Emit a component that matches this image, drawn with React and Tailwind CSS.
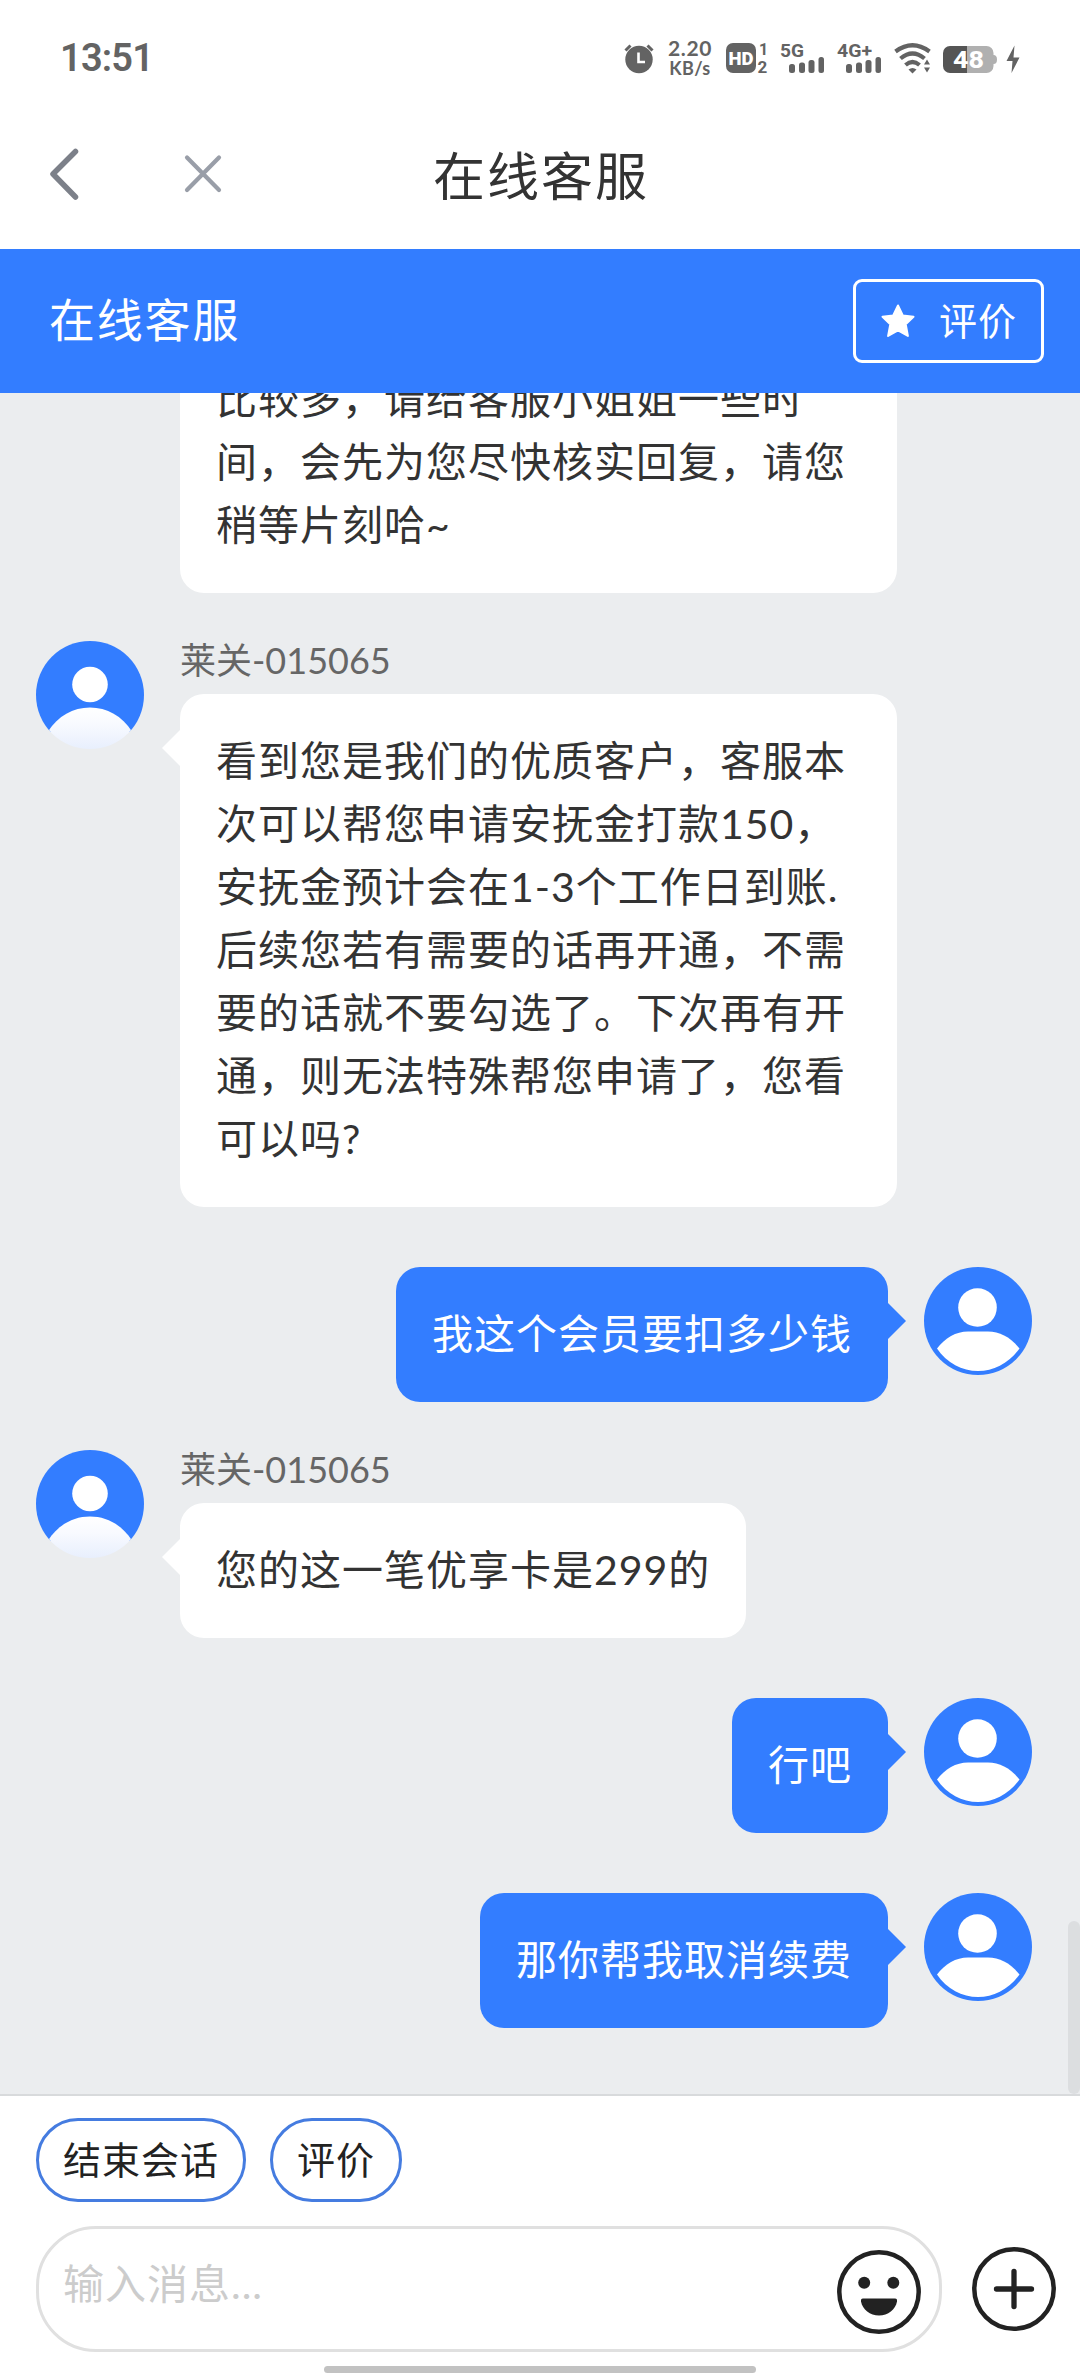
import React from 'react'

const messages = [
  {
    id: 1,
    from: 'agent',
    continued: true,
    text: '比较多，请给客服小姐姐一些时\n间，会先为您尽快核实回复，请您\n稍等片刻哈~',
  },
  {
    id: 2,
    from: 'agent',
    name: '莱关-015065',
    text: '看到您是我们的优质客户，客服本\n次可以帮您申请安抚金打款150，\n安抚金预计会在1-3个工作日到账.\n后续您若有需要的话再开通，不需\n要的话就不要勾选了。下次再有开\n通，则无法特殊帮您申请了，您看\n可以吗?',
  },
  { id: 3, from: 'user', text: '我这个会员要扣多少钱' },
  { id: 4, from: 'agent', name: '莱关-015065', text: '您的这一笔优享卡是299的' },
  { id: 5, from: 'user', text: '行吧' },
  { id: 6, from: 'user', text: '那你帮我取消续费' },
]

const quickActions = ['结束会话', '评价']

const SignalBars = () => (
  <g>
    <rect x="9" y="24" width="6" height="9" rx="2.5" />
    <rect x="19" y="22.5" width="6" height="10.5" rx="2.5" />
    <rect x="28.5" y="20" width="6" height="13" rx="2.5" />
    <rect x="38.5" y="17" width="5.5" height="16" rx="2.5" />
  </g>
)

const Signal = ({ label, width }) => (
  <svg className="overflow-visible" width="46" height="36" viewBox="0 0 46 36" fill="#636363">
    <text x="0" y="17" fontSize="19" fontWeight="700" fontFamily="Roboto, sans-serif" textLength={width} lengthAdjust="spacingAndGlyphs">
      {label}
    </text>
    <SignalBars />
  </svg>
)

const StatusBar = () => (
  <div className="flex h-[104px] items-center pt-3 pl-[60px] text-[#636363]">
    <span className="w-[562px] font-[Roboto,sans-serif] text-[38px] leading-[38px] font-semibold tracking-[-0.8px]">13:51</span>

    <svg className="shrink-0" width="34" height="36" viewBox="0 0 34 36">
      <circle cx="17" cy="19.5" r="13.7" fill="#636363" />
      <path d="M3.5 10.5l5-5M30.5 10.5l-5-5" stroke="#636363" strokeWidth="3" fill="none" />
      <path d="M16.5 12.5v9.500h6.500" stroke="#fff" strokeWidth="2.6" fill="none" />
    </svg>

    <div className="ml-[11px] flex w-[46px] flex-col items-center font-bold">
      <span className="text-[21px] leading-[18px] tracking-[0.6px]">2.20</span>
      <span className="mt-0.5 text-[18px] leading-[18px] tracking-[0.4px]">KB/s</span>
    </div>

    <svg className="ml-[13px]" width="44" height="36" viewBox="0 0 44 36" fill="#636363">
      <rect y="3" width="30" height="30" rx="7" />
      <text x="2.5" y="25" fontSize="19" fontWeight="900" fontFamily="Roboto, sans-serif" fill="#fff" textLength="25" lengthAdjust="spacingAndGlyphs">HD</text>
      <text x="33" y="14.5" fontSize="16" fontWeight="700" fontFamily="Roboto, sans-serif">1</text>
      <text x="31.5" y="32.5" fontSize="17" fontWeight="700" fontFamily="Roboto, sans-serif">2</text>
    </svg>

    <div className="ml-[10px] flex gap-[11px]">
      <Signal label="5G" width="24" />
      <Signal label="4G+" width="35" />
    </div>

    <svg className="ml-[11px]" width="38" height="36" viewBox="0 0 38 36" fill="none" stroke="#636363" strokeWidth="4.2">
      <path d="M1.5 11.5Q18.5 -1 35.5 11.5" />
      <path d="M6.5 18.5Q18.5 8.5 30.5 18.5" />
      <path d="M11.5 25Q18.5 19 25.5 25" />
      <path d="M14.5 29.500q4-3 8 0l-4 4z" fill="#636363" stroke="none" />
      <path d="M30 24.500h6l-3-5zM30 27.500h6l-3 5z" fill="#636363" stroke="none" />
    </svg>

    <svg className="ml-[11px]" width="54" height="36" viewBox="0 0 54 36">
      <path d="M7 6h17v27H7a7 7 0 0 1-7-7V13a7 7 0 0 1 7-7z" fill="#555" />
      <path d="M24 6h19.500a7 7 0 0 1 7 7v2a3.500 4.500 0 0 1 0 9v2a7 7 0 0 1-7 7H24z" fill="#b0b0b0" />
      <text x="10" y="28" fontSize="24" fontWeight="800" fontFamily="Roboto, sans-serif" fill="#fff" textLength="31" lengthAdjust="spacingAndGlyphs">48</text>
    </svg>

    <svg className="ml-[9px]" width="14" height="36" viewBox="0 0 14 36" fill="#636363">
      <path d="M8.500 5.500L0.500 21h6l-1 12L13.500 17.500h-6z" />
    </svg>
  </div>
)

const NavBar = () => (
  <div className="grid h-[145px] grid-cols-[1fr_auto_1fr] items-center">
    <div className="flex items-center gap-[103px] pb-[5px] pl-[48px]">
      <svg width="32" height="54" viewBox="0 0 32 54" fill="none" stroke="#7c8089" strokeWidth="5.5" strokeLinecap="round" strokeLinejoin="round">
        <path d="M27.5 4.500L5 27l22.500 23" />
      </svg>
      <svg width="40" height="40" viewBox="0 0 40 40" fill="none" stroke="#999ea8" strokeWidth="4.2" strokeLinecap="round">
        <path d="M4 3.500L36 36M36 3.500L4 36" />
      </svg>
    </div>
    <h1 className="pb-0.5 pl-0.5 text-[52px] leading-[60px] tracking-[2px] text-[#333]">在线客服</h1>
  </div>
)

const ServiceHeader = () => (
  <div className="flex h-[144px] shrink-0 items-center justify-between bg-[#337dff] pr-9 pl-[49px] text-white">
    <span className="pb-0.5 text-[46px] leading-[60px] tracking-[1.8px]">在线客服</span>
    <button className="flex h-[84px] w-[191px] items-center justify-between rounded-[9px] border-3 border-white pr-6 pl-[25px] text-[38px] leading-[48px] tracking-[1px]">
      <svg width="34" height="34" viewBox="0 0 34 34" fill="#fff" stroke="#fff" strokeWidth="2" strokeLinejoin="round">
        <path d="M17 1.500l4.800 10 10.700 1.300-7.800 7.500 2.200 11.700L17 26.500 7.100 32l2.200-11.700L1.500 12.800l10.700-1.300z" />
      </svg>
      <span className="pb-0.5">评价</span>
    </button>
  </div>
)

const AgentAvatar = () => (
  <svg className="shrink-0" width="108" height="108" viewBox="0 0 108 108">
    <defs>
      <linearGradient id="agentBody" x1="0" y1="0" x2="0" y2="1">
        <stop offset="0" stopColor="#fff" />
        <stop offset="0.4" stopColor="#f8faff" />
        <stop offset="1" stopColor="#e8effd" />
      </linearGradient>
      <clipPath id="agentClip">
        <circle cx="54" cy="54" r="54" />
      </clipPath>
    </defs>
    <g clipPath="url(#agentClip)">
      <rect width="108" height="91" fill="#337dff" />
      <circle cx="54" cy="43.5" r="17.8" fill="#fff" />
      <path d="M12 90.500C22 75 37 66.500 54 66.500S86 75 96 90.500V108H12z" fill="url(#agentBody)" />
    </g>
  </svg>
)

const UserAvatar = () => (
  <svg className="shrink-0" width="108" height="108" viewBox="0 0 108 108">
    <circle cx="54" cy="54" r="54" fill="#337dff" />
    <circle cx="53.5" cy="40.5" r="19.3" fill="#fff" />
    <path d="M13 81.500C21 71 32 64.500 44 64.500h20c12 0 23 6 31.500 17C85 96 70 104 54 104S23 96 13 81.500z" fill="#fff" />
  </svg>
)

const AgentMessage = ({ name, text, continued }) => (
  <div className="flex gap-9">
    {continued ? <div className="w-[108px] shrink-0" /> : <AgentAvatar />}
    <div>
      {name && <div className="h-[53px] text-[36px] leading-[38px] text-[#666]">{name}</div>}
      <div
        className={`relative rounded-3xl bg-white px-9 pt-[35px] pb-[37px] text-[41px] leading-[63px] tracking-[1px] whitespace-pre text-[#333] ${
          text.includes('\n') ? 'w-[717px]' : 'w-fit'
        }`}
      >
        {!continued && (
          <span className="absolute top-9 -left-[18px] border-y-[18px] border-r-[18px] border-y-transparent border-r-white" />
        )}
        {text}
      </div>
    </div>
  </div>
)

const UserMessage = ({ text }) => (
  <div className="flex justify-end gap-9">
    <div className="relative rounded-3xl bg-[#337dff] px-9 pt-[35px] pb-[37px] text-[41px] leading-[63px] tracking-[1px] text-white">
      {text}
      <span className="absolute top-9 -right-[18px] border-y-[18px] border-l-[18px] border-y-transparent border-l-[#337dff]" />
    </div>
    <UserAvatar />
  </div>
)

const MessageList = () => (
  <div className="relative flex h-[1701px] shrink-0 flex-col justify-end overflow-hidden bg-[#ebedef] pr-12 pb-[66px] pl-9">
    {messages.map((m) => (
      <div key={m.id} className={m.from === 'user' ? 'mt-[60px]' : 'mt-12'}>
        {m.from === 'user' ? <UserMessage text={m.text} /> : <AgentMessage {...m} />}
      </div>
    ))}
    {/* scroll thumb */}
    <div className="absolute right-0 bottom-0 h-[173px] w-3 rounded-full bg-[#dcdee0]" />
  </div>
)

const Composer = () => (
  <div className="flex flex-1 flex-col border-t-2 border-[#d8dadc] pt-[22px] pl-9">
    <div className="flex gap-6">
      {quickActions.map((label) => (
        <button key={label} className="h-[84px] rounded-full border-3 border-[#457ce0] px-6 pb-0.5 text-[38px] leading-[48px] tracking-[1px] text-[#222]">
          {label}
        </button>
      ))}
    </div>

    <div className="mt-6 flex items-center">
      <div className="flex h-[126px] w-[906px] shrink-0 items-center justify-between rounded-[60px] border-3 border-[#e0e0e0] pr-[18px] pl-6">
        <span className="pb-2.5 text-[41px] leading-[60px] tracking-[1px] text-[#ccc]">输入消息...</span>
        <svg className="mt-[5px]" width="84" height="84" viewBox="0 0 84 84" fill="#222">
          <circle cx="42" cy="42" r="39.7" fill="none" stroke="#222" strokeWidth="4.5" />
          <circle cx="27.2" cy="32.7" r="6" />
          <circle cx="56.3" cy="32.7" r="6" />
          <path d="M26 48.500h32q2.500 0 2 3C58.500 59.500 51 65.500 42 65.500S25.500 59.500 24 51.500q-.5-3 2-3z" />
        </svg>
      </div>
      <svg className="ml-[30px] shrink-0" width="84" height="84" viewBox="0 0 84 84" fill="none" stroke="#222">
        <circle cx="42" cy="42" r="39.7" strokeWidth="4.5" />
        <path d="M42 24.500v35M24.500 42h35" strokeWidth="5.3" strokeLinecap="round" />
      </svg>
    </div>

    <div className="mt-[14px] ml-[288px] h-[7px] w-[432px] rounded-full bg-[#c2c2c2]" />
  </div>
)

const App = () => (
  <div className="flex h-[2376px] w-[1080px] flex-col overflow-hidden bg-white font-[Lato,'Noto_Sans_CJK_SC',sans-serif]">
    <StatusBar />
    <NavBar />
    <ServiceHeader />
    <MessageList />
    <Composer />
  </div>
)

export default App
